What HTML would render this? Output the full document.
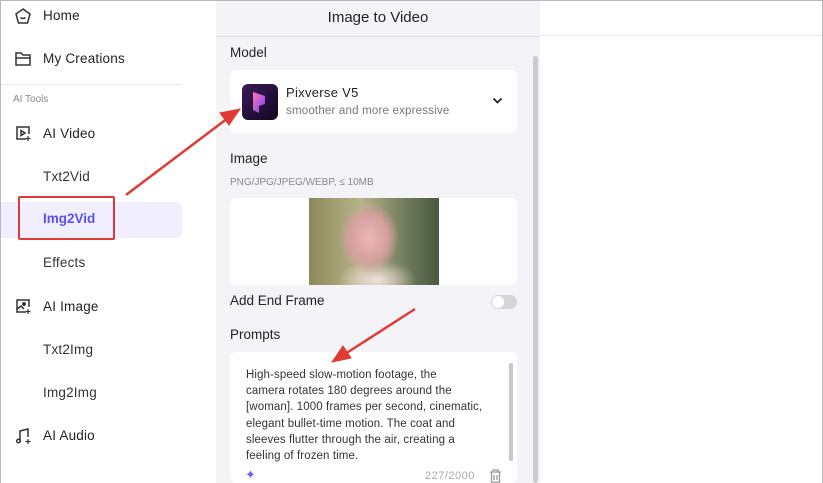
<!DOCTYPE html>
<html><head><style>
*{margin:0;padding:0;box-sizing:border-box}
body{width:823px;height:483px;overflow:hidden;background:#fff;font-family:"Liberation Sans",sans-serif;position:relative;color:#222}
.frame{position:absolute;left:0;top:0;width:823px;height:483px;border:1px solid #b8b8b8;border-bottom:none}
.t{position:absolute;white-space:nowrap}
.side{font-size:13.5px;color:#222;letter-spacing:0.2px}
.panel{position:absolute;left:216px;top:1px;width:324px;height:482px;background:#f4f4f8}
.card{position:absolute;background:#fff;border-radius:6px}
</style></head><body>
<div class="frame"></div>
<svg style="position:absolute;left:14px;top:7px" width="18" height="18" viewBox="0 0 18 18" fill="none" stroke="#333" stroke-width="1.5"><path d="M9 2L16 7L13.5 16H4.5L2 7Z"/><path d="M6.5 10.5q2.5 2 5 0"/></svg>
<div class="t side" style="left:43px;top:8px">Home</div>
<svg style="position:absolute;left:14px;top:50px" width="18" height="18" viewBox="0 0 18 18" fill="none" stroke="#333" stroke-width="1.5"><path d="M2 3h5l2 2h7v10H2z"/><path d="M2 8h14"/></svg>
<div class="t side" style="left:43px;top:51px">My Creations</div>
<div style="position:absolute;left:1px;top:84px;width:181px;height:1px;background:#e6e6e6"></div>
<div class="t" style="left:13px;top:94px;font-size:10px;color:#888">AI Tools</div>
<svg style="position:absolute;left:14px;top:124px" width="18" height="18" viewBox="0 0 18 18" fill="none" stroke="#333" stroke-width="1.5"><path d="M12 15H3V3h12v7"/><path d="M7 6.5l4 2.5-4 2.5z"/><path d="M14 12v5M11.5 14.5h5" stroke-width="1.2"/></svg>
<div class="t side" style="left:43px;top:126px">AI Video</div>
<div class="t side" style="left:43px;top:169px;color:#333">Txt2Vid</div>
<div style="position:absolute;left:1px;top:202px;width:181px;height:36px;background:#f1efff;border-radius:0 6px 6px 0"></div>
<div style="position:absolute;left:18px;top:196px;width:97px;height:44px;border:2px solid #e03a36;border-radius:2px"></div>
<div class="t" style="left:43px;top:211px;font-size:13.5px;font-weight:bold;color:#5b4ff0">Img2Vid</div>
<div class="t side" style="left:43px;top:255px;color:#333">Effects</div>
<svg style="position:absolute;left:14px;top:297px" width="18" height="18" viewBox="0 0 18 18" fill="none" stroke="#333" stroke-width="1.5"><path d="M12 15H3V3h12v7"/><circle cx="10" cy="7" r="1.2" fill="#333"/><path d="M3 12l4-3 3 3"/><path d="M14 12v5M11.5 14.5h5" stroke-width="1.2"/></svg>
<div class="t side" style="left:43px;top:299px">AI Image</div>
<div class="t side" style="left:43px;top:342px;color:#333">Txt2Img</div>
<div class="t side" style="left:43px;top:385px;color:#333">Img2Img</div>
<svg style="position:absolute;left:14px;top:427px" width="18" height="18" viewBox="0 0 18 18" fill="none" stroke="#333" stroke-width="1.5"><path d="M6 14V4l8-2v8"/><circle cx="4.5" cy="14" r="1.8"/><path d="M14 12v5M11.5 14.5h5" stroke-width="1.2"/></svg>
<div class="t side" style="left:43px;top:428px">AI Audio</div>
<div style="position:absolute;left:540px;top:35px;width:282px;height:1px;background:#e6e6e6"></div>
<div class="panel">
<div class="t" style="left:0;width:324px;text-align:center;top:8px;font-size:15px;color:#222">Image to Video</div>
<div style="position:absolute;left:0;top:35px;width:324px;height:1px;background:#dcdce0"></div>
<div style="position:absolute;left:317px;top:55px;width:5px;height:427px;background:#ccc;border-radius:3px"></div>
<div class="t" style="left:14px;top:44px;font-size:13.5px">Model</div>
<div class="card" style="left:14px;top:69px;width:287px;height:63px"></div>
<div style="position:absolute;left:26px;top:83px;width:36px;height:36px;border-radius:6px;background:linear-gradient(135deg,#3a1a5a,#12081f)"></div>
<svg style="position:absolute;left:33px;top:88px" width="22" height="26" viewBox="0 0 22 26"><path d="M4 3l12 4v8l-6 2v7l-6-3z" fill="url(#g)"/><defs><linearGradient id="g" x1="0" y1="0" x2="1" y2="1"><stop offset="0" stop-color="#ff7ab0"/><stop offset="1" stop-color="#7a3cff"/></linearGradient></defs></svg>
<div class="t" style="left:70px;top:84px;font-size:13px;letter-spacing:0.3px">Pixverse V5</div>
<div class="t" style="left:70px;top:104px;font-size:11.5px;color:#777;letter-spacing:0.2px">smoother and more expressive</div>
<svg style="position:absolute;left:276px;top:96px" width="11" height="8" viewBox="0 0 11 8" fill="none" stroke="#222" stroke-width="1.8"><path d="M1.5 1.5l4 4 4-4"/></svg>
<div class="t" style="left:14px;top:150px;font-size:13.5px">Image</div>
<div class="t" style="left:14px;top:176px;font-size:10px;color:#888">PNG/JPG/JPEG/WEBP, ≤ 10MB</div>
<div class="card" style="left:14px;top:197px;width:287px;height:87px"></div>
<div style="position:absolute;left:93px;top:197px;width:130px;height:87px;background:radial-gradient(ellipse 30px 36px at 60px 40px,#e9b9b4 0,#d8a0a0 60%,transparent 100%),radial-gradient(ellipse 40px 20px at 68px 82px,#f3e2dc 0,transparent 100%),linear-gradient(90deg,#8c8a5a,#b7b38a 40%,#6f7a5a 75%,#495a40)"></div>
<div class="t" style="left:14px;top:292px;font-size:13.5px">Add End Frame</div>
<div style="position:absolute;left:275px;top:294px;width:26px;height:14px;border-radius:7px;background:#d6d6da"><div style="position:absolute;left:1px;top:1px;width:12px;height:12px;border-radius:6px;background:#fff"></div></div>
<div class="t" style="left:14px;top:326px;font-size:13.5px">Prompts</div>
<div class="card" style="left:14px;top:351px;width:287px;height:131px"></div>
<div style="position:absolute;left:293px;top:362px;width:4px;height:98px;background:#c8c8c8;border-radius:2px"></div>
<div style="position:absolute;left:30px;top:366px;white-space:nowrap;font-size:11.5px;line-height:16.2px;color:#333;letter-spacing:0.1px">High-speed slow-motion footage, the<br>camera rotates 180 degrees around the<br>[woman]. 1000 frames per second, cinematic,<br>elegant bullet-time motion. The coat and<br>sleeves flutter through the air, creating a<br>feeling of frozen time.</div>
<div class="t" style="left:29px;top:466px;font-size:13px;color:#7a5cf0">✦</div>
<div class="t" style="left:209px;top:469px;font-size:11px;color:#aaa;letter-spacing:0.5px">227/2000</div>
<svg style="position:absolute;left:273px;top:468px" width="13" height="14" viewBox="0 0 13 14" fill="none" stroke="#999" stroke-width="1.3"><path d="M1 3h11M4 3V1h5v2M2.5 3v10h8V3M5 6v5M8 6v5"/></svg>
</div>
<svg style="position:absolute;left:0;top:0" width="823" height="483"><g fill="#e03a36" stroke="#e03a36"><line x1="126" y1="195" x2="228" y2="118" stroke-width="2.5"/><path d="M240 109L220 113L229 125Z"/><line x1="415" y1="309" x2="345" y2="354" stroke-width="2.5"/><path d="M332 362L343 346L351 358Z"/></g></svg>
</body></html>
